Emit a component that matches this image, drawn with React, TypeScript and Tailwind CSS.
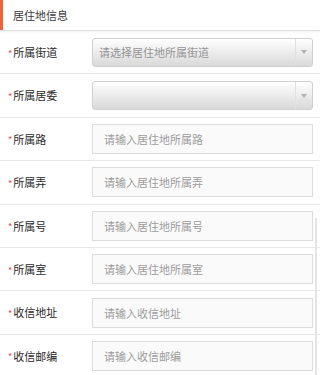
const font = { fontFamily: '"Noto Sans CJK SC", "Noto Sans", sans-serif' };

interface Field {
  label: string;
  kind: 'select' | 'input';
  placeholder: string;
}

const fields: Field[] = [
  { label: '所属街道', kind: 'select', placeholder: '请选择居住地所属街道' },
  { label: '所属居委', kind: 'select', placeholder: '' },
  { label: '所属路', kind: 'input', placeholder: '请输入居住地所属路' },
  { label: '所属弄', kind: 'input', placeholder: '请输入居住地所属弄' },
  { label: '所属号', kind: 'input', placeholder: '请输入居住地所属号' },
  { label: '所属室', kind: 'input', placeholder: '请输入居住地所属室' },
  { label: '收信地址', kind: 'input', placeholder: '请输入收信地址' },
  { label: '收信邮编', kind: 'input', placeholder: '请输入收信邮编' },
];

function SelectBox({ placeholder }: { placeholder: string }) {
  return (
    <div className="flex h-[29px] w-[221px] items-stretch rounded-[3px] border border-[#d0d0d0] bg-gradient-to-b from-white to-[#d9d9d9]">
      <div className="flex flex-1 items-center pl-[6px] text-[11px] text-[#949494]">{placeholder}</div>
      <div className="flex w-[17px] items-center justify-center border-l border-[#e0e0e0]">
        <div className="h-0 w-0 border-x-[3px] border-t-[4px] border-x-transparent border-t-[#b0b0b0]" />
      </div>
    </div>
  );
}

function InputBox({ placeholder }: { placeholder: string }) {
  return (
    <input
      readOnly
      placeholder={placeholder}
      style={font}
      className="h-[30px] w-[221px] border border-[#dcdcdc] bg-[#fafafa] pl-[11px] text-[11px] outline-none placeholder:text-[#9c9c9c]"
    />
  );
}

export default function App() {
  return (
    <div className="relative h-[375px] w-[320px] overflow-hidden bg-white text-[#333]" style={font}>
      {/* header */}
      <div className="flex h-[31px] items-stretch border-b border-[#dedede] shadow-[0_1px_2px_rgba(0,0,0,0.06)]">
        <div className="w-[3px] bg-[#f0623a]" />
        <div className="flex items-center pl-[10px] text-[11px] text-[#3a3a3a]">居住地信息</div>
      </div>

      {fields.map((f) => (
        <div key={f.label} className="flex h-[43.4px] items-center border-b border-[#e8e8e8]">
          <div className="flex w-[92px] items-center pl-[8px] text-[11px] text-[#2a2a2a]">
            <span className="mr-[1px] translate-y-[1px] text-[9px] leading-none text-[#e0484a]">*</span>
            {f.label}
          </div>
          {f.kind === 'select' ? <SelectBox placeholder={f.placeholder} /> : <InputBox placeholder={f.placeholder} />}
        </div>
      ))}

      {/* scrollbar trace */}
      <div className="absolute left-[315px] top-[218px] h-[160px] w-[2px] bg-[#e4e4e4]" />
    </div>
  );
}
